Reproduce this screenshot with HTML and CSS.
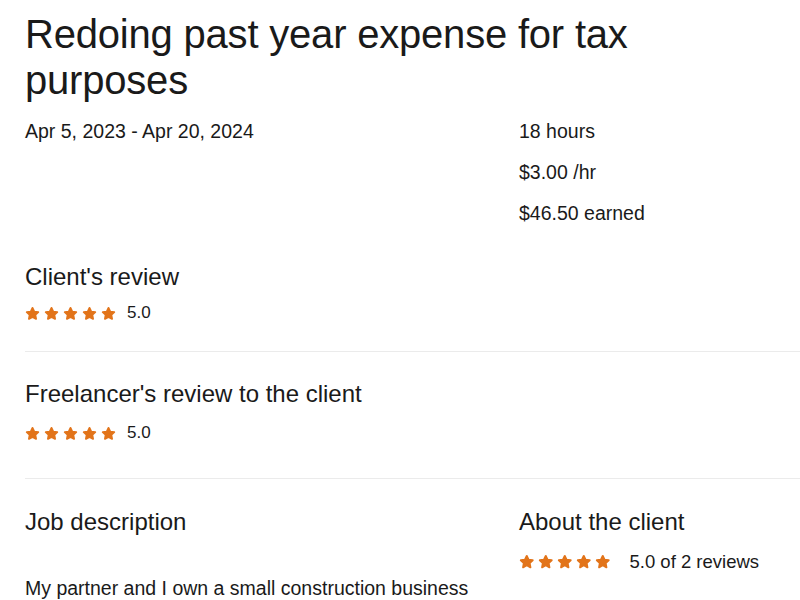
FILE: index.html
```html
<!DOCTYPE html>
<html lang="en">
<head>
<meta charset="utf-8">
<title>Redoing past year expense for tax purposes</title>
<link rel="stylesheet" href="styles.css">
</head>
<body>
<svg width="0" height="0" class="defs" aria-hidden="true">
  <defs>
    <symbol id="star" viewBox="0 0 24 24">
      <path d="M12 3l2.8 5.9 6.4.8-4.7 4.5 1.2 6.4L12 17.4l-5.7 3.2 1.2-6.4-4.7-4.5 6.4-.8z" fill="currentColor" stroke="currentColor" stroke-width="3" stroke-linejoin="round"/>
    </symbol>
  </defs>
</svg>
<main class="page">
  <h1 class="title">Redoing past year expense for tax purposes</h1>

  <div class="meta">
    <div class="dates">Apr 5, 2023 - Apr 20, 2024</div>
    <ul class="facts">
      <li>18 hours</li>
      <li>$3.00 /hr</li>
      <li>$46.50 earned</li>
    </ul>
  </div>

  <section class="section section-client">
    <h2 class="heading">Client's review</h2>
    <div class="rating rating-client">
      <span class="stars">
        <svg class="star"><use href="#star"/></svg><svg class="star"><use href="#star"/></svg><svg class="star"><use href="#star"/></svg><svg class="star"><use href="#star"/></svg><svg class="star"><use href="#star"/></svg>
      </span>
      <span class="score">5.0</span>
    </div>
  </section>

  <section class="section section-freelancer">
    <h2 class="heading">Freelancer's review to the client</h2>
    <div class="rating rating-freelancer">
      <span class="stars">
        <svg class="star"><use href="#star"/></svg><svg class="star"><use href="#star"/></svg><svg class="star"><use href="#star"/></svg><svg class="star"><use href="#star"/></svg><svg class="star"><use href="#star"/></svg>
      </span>
      <span class="score">5.0</span>
    </div>
  </section>

  <section class="section section-job">
    <div class="job-grid">
      <div class="job">
        <h2 class="heading">Job description</h2>
        <p class="job-text">My partner and I own a small construction business</p>
      </div>
      <div class="about">
        <h2 class="heading">About the client</h2>
        <div class="rating rating-about">
          <span class="stars stars-lg">
            <svg class="star"><use href="#star"/></svg><svg class="star"><use href="#star"/></svg><svg class="star"><use href="#star"/></svg><svg class="star"><use href="#star"/></svg><svg class="star"><use href="#star"/></svg>
          </span>
          <span class="score score-lg">5.0 of 2 reviews</span>
        </div>
      </div>
    </div>
  </section>
</main>
</body>
</html>
```

FILE: styles.css
```css
html, body {
  margin: 0;
  padding: 0;
  background: #ffffff;
  overflow: hidden;
}

body {
  font-family: "Liberation Sans", Arial, sans-serif;
  color: #1a1a1a;
}

.defs {
  position: absolute;
  width: 0;
  height: 0;
}

.page {
  width: 775px;
  padding: 11px 0 0 25px;
}

.title {
  margin: 0;
  max-width: 640px;
  font-size: 40px;
  line-height: 46px;
  font-weight: 400;
  letter-spacing: -0.2px;
}

.meta {
  display: grid;
  grid-template-columns: 494px 1fr;
  margin-top: 17px;
  font-size: 19.5px;
  line-height: 22px;
}

.facts {
  list-style: none;
  margin: 0;
  padding: 0;
  display: flex;
  flex-direction: column;
  gap: 19px;
}

.heading {
  margin: 0;
  font-size: 24px;
  line-height: 28px;
  font-weight: 400;
}

.section {
  border-top: 1px solid #ebebeb;
}

.section-client {
  border-top: none;
  margin-top: 39px;
  padding-bottom: 28px;
}

.section-freelancer {
  padding-top: 28px;
  padding-bottom: 35px;
}

.section-job {
  padding-top: 29px;
}

.rating {
  display: flex;
  align-items: center;
  height: 20px;
}

.rating-client {
  margin-top: 12px;
}

.rating-freelancer {
  margin-top: 15px;
}

.stars {
  display: flex;
  gap: 4px;
  color: #e2741a;
}

.star {
  width: 15px;
  height: 15px;
  display: block;
}

.stars-lg {
  gap: 3.5px;
}

.stars-lg .star {
  width: 15.5px;
  height: 15.5px;
}

.score {
  margin-left: 11px;
  font-size: 17px;
  line-height: 20px;
}

.job-grid {
  display: grid;
  grid-template-columns: 494px 1fr;
}

.job-text {
  margin: 41px 0 0;
  font-size: 19.5px;
  line-height: 22px;
}

.rating-about {
  margin-top: 15px;
  height: 22px;
}

.score-lg {
  margin-left: 19px;
  font-size: 18.5px;
  line-height: 22px;
}
```
